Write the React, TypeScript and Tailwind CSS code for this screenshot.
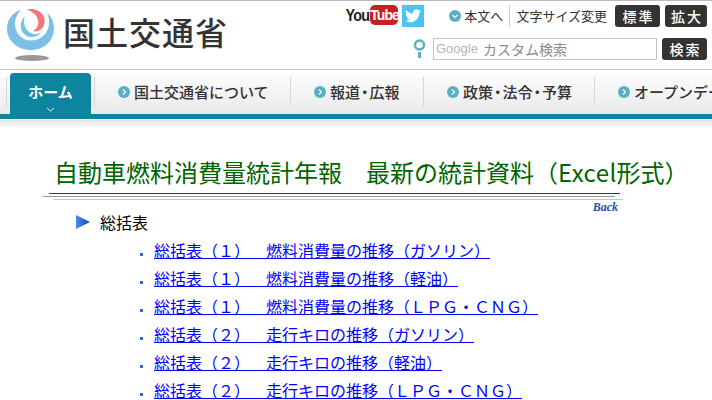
const jp = "font-['Noto_Sans_CJK_JP','Noto_Sans',sans-serif]";

const navItems = [
  { label: '国土交通省について', width: 'w-[196px]' },
  { label: '報道・広報', width: 'w-[133px]' },
  { label: '政策・法令・予算', width: 'w-[171px]' },
  { label: 'オープンデータ', width: 'w-[160px]' },
];

const links = [
  '総括表（１）　燃料消費量の推移（ガソリン）',
  '総括表（１）　燃料消費量の推移（軽油）',
  '総括表（１）　燃料消費量の推移（ＬＰＧ・ＣＮＧ）',
  '総括表（２）　走行キロの推移（ガソリン）',
  '総括表（２）　走行キロの推移（軽油）',
  '総括表（２）　走行キロの推移（ＬＰＧ・ＣＮＧ）',
];

function Logo() {
  return (
    <svg width="50" height="53" viewBox="0 0 50 53" className="shrink-0">
      <path d="M14 1 C4 4 0 12 0 20 C0 32 11 41 24 41 C38 41 47 31 47 19 C47 12 44 7 40 4 C44 12 42 22 36 27 C29 33 19 33 13 27 C6 20 6 9 14 1 Z" fill="#7cc0e8" />
      <path d="M18 7 C13 12 12 20 17 25 C22 30 30 29 35 23 C31 26 25 26 21 22 C17 18 16 12 18 7 Z" fill="#7cc0e8" />
      <path d="M20 0 C25 -1 33 1 36 6 C39 11 38 18 33 21 C31 22 29 23 26 22 C30 20 32 16 31 11 C30 6 25 3 20 0 Z" fill="#f0787a" />
      <ellipse cx="25" cy="49" rx="17" ry="3" fill="#999999" />
    </svg>
  );
}

function Dot({ down = false }: { down?: boolean }) {
  return (
    <span className="w-3 h-3 rounded-full bg-[#5bafc2] flex items-center justify-center shrink-0">
      <svg width="8" height="8" viewBox="0 0 8 8" fill="none" stroke="white" strokeWidth="1.1">
        {down ? <path d="M1.5 3 L4 5.5 L6.5 3" /> : <path d="M3 1.5 L5.5 4 L3 6.5" />}
      </svg>
    </span>
  );
}

function DarkButton({ label, width }: { label: string; width: string }) {
  return (
    <span className={`${width} h-[22px] rounded-[3px] bg-[#333333] text-white text-[14px] tracking-[2px] pl-[2px] font-medium flex items-center justify-center`}>
      {label}
    </span>
  );
}

// the "・" sits narrow in the original nav
function NavLabel({ label }: { label: string }) {
  const parts = label.split('・');
  return (
    <span className="text-[15px] font-medium text-[#333333] whitespace-nowrap">
      {parts.map((part, i) => (
        <span key={part}>
          {i > 0 && <span className="mx-[1px] [font-feature-settings:'palt']">・</span>}
          {part}
        </span>
      ))}
    </span>
  );
}

export default function App() {
  return (
    <div className={`w-[712px] h-[400px] overflow-hidden bg-white [text-spacing-trim:space-all] ${jp}`}>
      {/* Header */}
      <header className="h-[69px] border-t border-[#bbbbbb] flex justify-between">
        <div className="flex items-start pl-[7px] pt-[8px] gap-[6px]">
          <Logo />
          <span className="text-[32px] tracking-[1px] leading-[44px] font-medium text-[#333333] whitespace-nowrap">国土交通省</span>
        </div>
        <div className="flex flex-col items-end pr-[5px]">
          <div className="flex items-center h-[22px] mt-[4px]">
            <span className="font-['Liberation_Sans',sans-serif] text-[16px] font-bold text-[#222222] tracking-[-1px] scale-x-90 origin-right">You</span>
            <span className="font-['Liberation_Sans',sans-serif] ml-[1px] w-[28px] h-[20px] mb-[2px] leading-[20px] text-center rounded-[5px] bg-[#cc2020] text-white text-[14px] font-bold tracking-[-1px]">Tube</span>
            <span className="ml-[4px] w-[22px] h-[22px] bg-[#4cc4f2] flex items-center justify-center">
              <svg width="16" height="14" viewBox="0 0 24 20" fill="white">
                <path d="M24 2.4c-.9.4-1.8.7-2.8.8 1-.6 1.800-1.600 2.200-2.700-1 .6-2 1-3.100 1.200A4.900 4.900 0 0 0 11.900 6.100C7.800 5.900 4.200 3.900 1.700.9c-1.300 2.200-.7 5.100 1.500 6.600-.8 0-1.600-.2-2.200-.6 0 2.300 1.600 4.400 3.900 4.900-.7.2-1.500.2-2.200.1.600 2 2.400 3.400 4.600 3.400A9.900 9.900 0 0 1 0 17.300 14 14 0 0 0 7.500 19.500c9.100 0 14.300-7.700 14-14.600 1-.7 1.800-1.600 2.500-2.500z" />
              </svg>
            </span>
            <span className="ml-[25px] flex items-center gap-[3px] text-[13px] text-[#333333] whitespace-nowrap">
              <Dot down />
              本文へ
            </span>
            <span className="ml-[6px] pl-[6px] h-[22px] leading-[22px] border-l border-[#cccccc] text-[13px] text-[#333333] whitespace-nowrap">文字サイズ変更</span>
            <span className="ml-[8px]"><DarkButton label="標準" width="w-[45px]" /></span>
            <span className="ml-[5px]"><DarkButton label="拡大" width="w-[42px]" /></span>
          </div>
          <div className="flex items-center mt-[11px]">
            <svg width="13" height="20" viewBox="0 0 13 20" className="mr-[7px]">
              <circle cx="6.500" cy="6" r="4.500" fill="none" stroke="#5bafc2" strokeWidth="2.500" />
              <rect x="5" y="13" width="3" height="6" fill="#5bafc2" />
            </svg>
            <span className="w-[224px] h-[22px] border border-[#c4c4c4] flex items-center pl-[2px] gap-[5px]">
              <span className="font-['Liberation_Sans',sans-serif] text-[13px] text-[#b5b5b5]">Google</span>
              <span className="text-[14px] text-[#8a8a8a] whitespace-nowrap">カスタム検索</span>
            </span>
            <span className="ml-[5px]"><DarkButton label="検索" width="w-[45px]" /></span>
          </div>
        </div>
      </header>

      {/* Global nav */}
      <nav className="h-[44px] border-t border-[#c8c8c8] bg-gradient-to-b from-white to-[#e9e9e9] flex items-end border-b-[5px] border-b-[#0e849f] box-content overflow-hidden">
        <div className="ml-[6px] self-stretch flex items-center shrink-0">
          <span className="w-px h-[30px] bg-[#d6d6d6]" />
        </div>
        <div className="ml-[3px] w-[81px] h-[41px] shrink-0 rounded-t-[4px] bg-[#0e849f] text-white flex flex-col items-center pt-[8px]">
          <span className="text-[15px] leading-[22px] font-bold whitespace-nowrap">ホーム</span>
          <svg width="9" height="5" viewBox="0 0 9 5" fill="none" stroke="white" strokeWidth="0.9" className="mt-[4px]">
            <path d="M1 1 L4.500 4 L8 1" />
          </svg>
        </div>
        <div className="ml-[3px] self-stretch flex shrink-0">
          {navItems.map(item => (
            <div key={item.label} className={`${item.width} shrink-0 flex items-center relative pl-[24px] gap-[4px]`}>
              <span className="absolute left-0 top-[7px] h-[30px] w-px bg-[#d6d6d6]" />
              <Dot />
              <NavLabel label={item.label} />
            </div>
          ))}
        </div>
      </nav>
      <div className="h-[1px] bg-white" />
      <div className="h-[7px] bg-gradient-to-b from-[#e4e4e4] to-[#f7f7f7]" />

      {/* Main */}
      <main>
        <h1 className="pl-[54px] pt-[27px] text-[24px] leading-[35px] font-normal text-[#006400] whitespace-nowrap">
          自動車燃料消費量統計年報　最新の統計資料（<span className="tracking-[0.4px]">Excel</span>形式）
        </h1>
        <div className="mt-[4px] ml-[49px] w-[571px] h-px bg-[#006400]" />
        <div className="mt-[2px] ml-[43px] w-[572px] h-px bg-[#999999]" />
        <div className="mt-[2px] ml-[53px] w-[570px] h-px bg-[#d2cc94]" />
        <div className="pr-[94px] text-right font-['Liberation_Serif',serif] italic font-bold text-[12px] leading-[14px] text-[#1f4fa8]">Back</div>

        <div className="-mt-[6px] pl-[76px] flex items-center gap-[10px] h-[28px]">
          <svg width="14" height="14" viewBox="0 0 14 14">
            <defs>
              <linearGradient id="arrow" x1="0" y1="0" x2="1" y2="0">
                <stop offset="0" stopColor="#4a90e8" />
                <stop offset="1" stopColor="#1040b8" />
              </linearGradient>
            </defs>
            <path d="M0 0 L14 7 L0 14 Z" fill="url(#arrow)" />
          </svg>
          <span className="text-[16px] text-black">総括表</span>
        </div>

        <ul className="pl-[140px]">
          {links.map(label => (
            <li key={label} className="h-[28px] flex items-center">
              <span className="w-[3px] h-[3px] bg-[#3366dd] mr-[11px] mt-[8px] shrink-0" />
              <a href="#" className="text-[16px] text-[#0000ff] underline whitespace-nowrap">{label}</a>
            </li>
          ))}
        </ul>
      </main>
    </div>
  );
}
